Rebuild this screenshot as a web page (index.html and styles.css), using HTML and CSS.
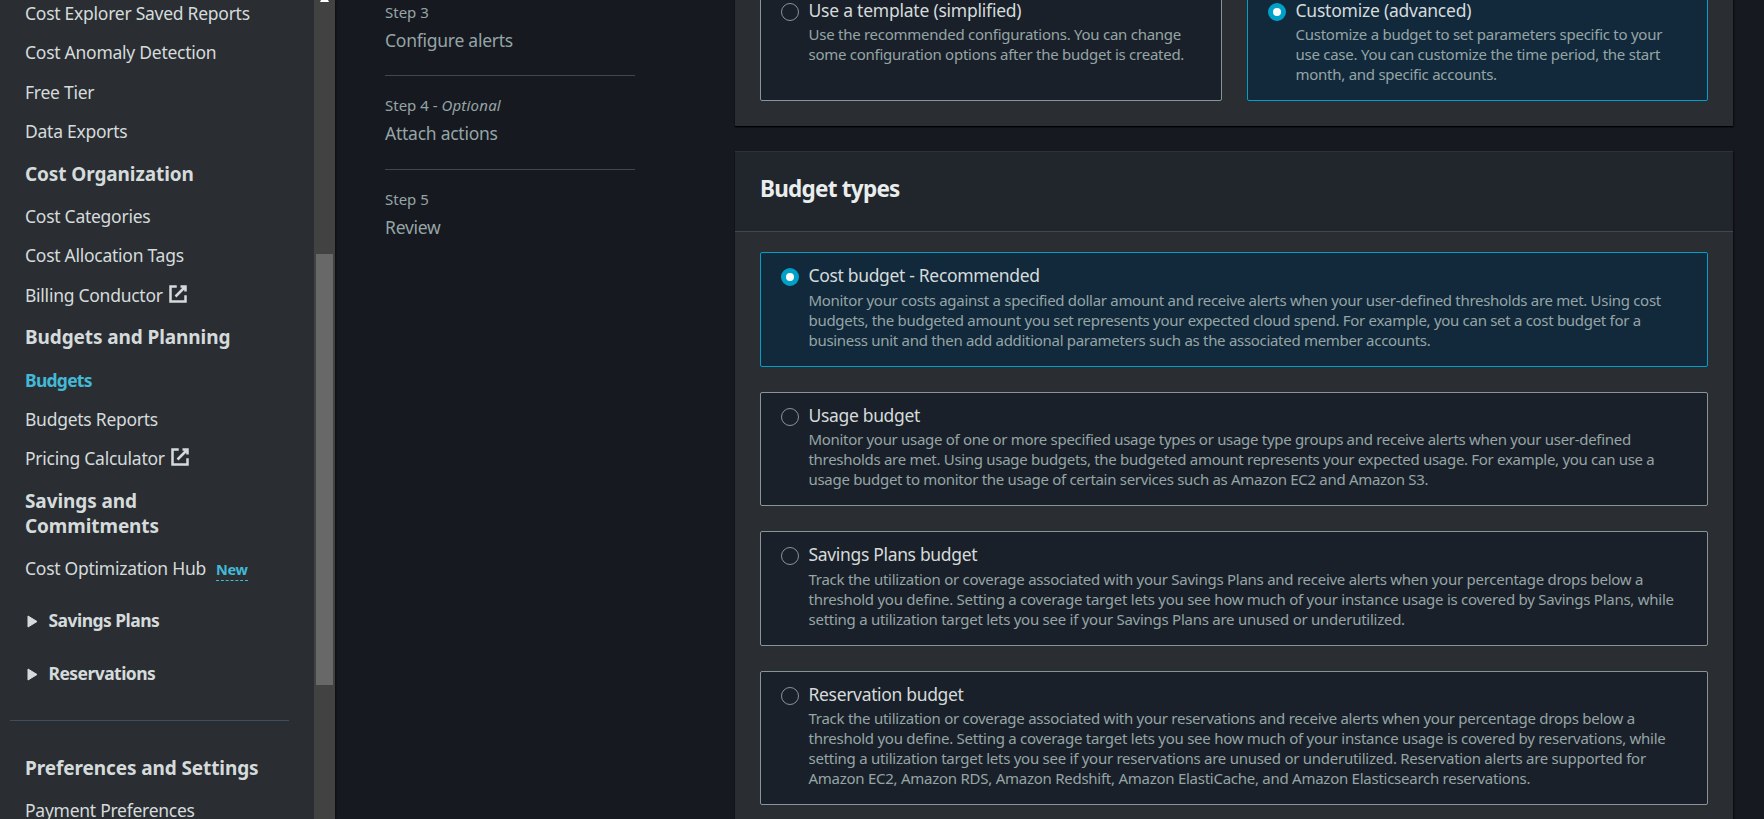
FILE: index.html
```html
<!DOCTYPE html>
<html lang="en">
<head>
<meta charset="utf-8">
<title>Create budget</title>
<link rel="stylesheet" href="styles.css">
</head>
<body>
<div class="app">
  <nav class="sidebar">
    <div class="nav">
      <a class="item">Cost Explorer Saved Reports</a>
      <a class="item">Cost Anomaly Detection</a>
      <a class="item">Free Tier</a>
      <a class="item">Data Exports</a>
      <h3 class="group">Cost Organization</h3>
      <a class="item">Cost Categories</a>
      <a class="item">Cost Allocation Tags</a>
      <a class="item">Billing Conductor<svg class="ext" viewBox="0 0 16 16"><path d="M10 2h4v4M6 10l8-8M14 9.05V14H2V2h5"/></svg></a>
      <h3 class="group">Budgets and Planning</h3>
      <a class="item active">Budgets</a>
      <a class="item">Budgets Reports</a>
      <a class="item">Pricing Calculator<svg class="ext" viewBox="0 0 16 16"><path d="M10 2h4v4M6 10l8-8M14 9.05V14H2V2h5"/></svg></a>
      <h3 class="group">Savings and<br>Commitments</h3>
      <a class="item">Cost Optimization Hub<span class="new">New</span></a>
      <div class="fold"><svg class="caret" viewBox="0 0 11 13"><path d="M1 1v11l9-5.500z"/></svg>Savings Plans</div>
      <div class="fold"><svg class="caret" viewBox="0 0 11 13"><path d="M1 1v11l9-5.500z"/></svg>Reservations</div>
      <hr class="rule">
      <h3 class="group">Preferences and Settings</h3>
      <a class="item">Payment Preferences</a>
    </div>
    <div class="track"><div class="arrow"></div><div class="thumb"></div></div>
  </nav>
  <ol class="steps">
    <li class="step"><div class="num">Step 3</div><div class="name">Configure alerts</div></li>
    <li class="step"><div class="num">Step 4 - <i class="optional">Optional</i></div><div class="name">Attach actions</div></li>
    <li class="step"><div class="num">Step 5</div><div class="name">Review</div></li>
  </ol>
  <main class="content">
    <section class="panel">
      <div class="tiles two">
        <label class="tile"><span class="radio"></span><span class="text"><span class="label">Use a template (simplified)</span><span class="desc">Use the recommended configurations. You can change<br>some configuration options after the budget is created.</span></span></label>
        <label class="tile selected"><span class="radio"></span><span class="text"><span class="label">Customize (advanced)</span><span class="desc">Customize a budget to set parameters specific to your<br>use case. You can customize the time period, the start<br>month, and specific accounts.</span></span></label>
      </div>
    </section>
    <section class="panel">
      <header class="head"><h2 class="title">Budget types</h2></header>
      <div class="tiles list">
        <label class="tile selected"><span class="radio"></span><span class="text"><span class="label">Cost budget - Recommended</span><span class="desc tight">Monitor your costs against a specified dollar amount and receive alerts when your user-defined thresholds are met. Using cost<br>budgets, the budgeted amount you set represents your expected cloud spend. For example, you can set a cost budget for a<br>business unit and then add additional parameters such as the associated member accounts.</span></span></label>
        <label class="tile"><span class="radio"></span><span class="text"><span class="label">Usage budget</span><span class="desc tight">Monitor your usage of one or more specified usage types or usage type groups and receive alerts when your user-defined<br>thresholds are met. Using usage budgets, the budgeted amount represents your expected usage. For example, you can use a<br>usage budget to monitor the usage of certain services such as Amazon EC2 and Amazon S3.</span></span></label>
        <label class="tile"><span class="radio"></span><span class="text"><span class="label">Savings Plans budget</span><span class="desc">Track the utilization or coverage associated with your Savings Plans and receive alerts when your percentage drops below a<br>threshold you define. Setting a coverage target lets you see how much of your instance usage is covered by Savings Plans, while<br>setting a utilization target lets you see if your Savings Plans are unused or underutilized.</span></span></label>
        <label class="tile"><span class="radio"></span><span class="text"><span class="label">Reservation budget</span><span class="desc">Track the utilization or coverage associated with your reservations and receive alerts when your percentage drops below a<br>threshold you define. Setting a coverage target lets you see how much of your instance usage is covered by reservations, while<br>setting a utilization target lets you see if your reservations are unused or underutilized. Reservation alerts are supported for<br>Amazon EC2, Amazon RDS, Amazon Redshift, Amazon ElastiCache, and Amazon Elasticsearch reservations.</span></span></label>
      </div>
    </section>
  </main>
</div>
</body>
</html>
```

FILE: styles.css
```css
* { box-sizing: border-box; }
body {
  margin: 0;
  height: 819px;
  overflow: hidden;
  background: #16191f;
  color: #d5dbdb;
  font-family: "Noto Sans", sans-serif;
  font-size: 17.500px;
  white-space: nowrap;
}
.app { display: flex; height: 819px; overflow: hidden; }

.sidebar {
  display: flex;
  flex: none;
  width: 335px;
  height: 819px;
  background: #2a2e33;
  box-shadow: 1px 0 2px rgba(0, 0, 0, .5);
}
.nav { display: flex; flex-direction: column; width: 314px; padding-left: 25px; }
.item {
  display: flex;
  flex: none;
  align-items: center;
  height: 27px;
  margin-bottom: 12.400px;
  line-height: 27px;
  letter-spacing: -.26px;
}
.active { color: #44b9d6; font-weight: 700; letter-spacing: -.75px; }
.group {
  flex: none;
  margin: 4.200px 0 16.300px;
  font-size: 19px;
  line-height: 25px;
  font-weight: 700;
  letter-spacing: -.1px;
}
.ext {
  width: 20px;
  height: 20px;
  margin: -3px 0 0 5px;
  fill: none;
  stroke: #d5dbdb;
  stroke-width: 2;
}
.new {
  height: 21px;
  margin: 3px 0 0 10px;
  border-bottom: 1px dashed #44b9d6;
  color: #44b9d6;
  font-size: 14.500px;
  line-height: 19px;
  font-weight: 700;
}
.fold {
  display: flex;
  flex: none;
  align-items: center;
  height: 27px;
  margin: 12.500px 0 13.500px;
  font-weight: 700;
  line-height: 27px;
  letter-spacing: -.55px;
}
.caret { width: 11px; height: 13px; margin: 2px 11px 0 1.500px; fill: #d5dbdb; stroke: #d5dbdb; stroke-linejoin: round; }
.rule { flex: none; width: 279px; height: 1px; margin: 19px 0 31px -15px; border: 0; background: #414d5c; }
.track { width: 21px; height: 819px; background: #424242; }
.arrow { width: 9px; height: 2px; margin: 0 auto 252px; background: #fff; clip-path: polygon(1px 0, 8px 0, 9px 2px, 0 2px); }
.thumb { width: 17px; height: 431px; margin-left: 2px; background: #686868; }

.steps { flex: none; width: 250px; margin: 0 100px 0 50px; padding: 2px 0 0; list-style: none; color: #95a5a6; }
.step { height: 94px; }
.step:first-child { height: 73px; }
.step + .step { border-top: 1px solid #414750; padding-top: 19px; }
.num { height: 25px; font-size: 15px; line-height: 20px; }
.optional { letter-spacing: .2px; }
.name { line-height: 27px; letter-spacing: -.25px; }

.content { flex: none; width: 998px; margin-top: -38px; }
.panel { margin-bottom: 25px; background: #2a2e33; box-shadow: 0 1px 1px #000, 1px 1px 2px rgba(0, 0, 0, .4); }
.panel:first-child { height: 164px; padding-top: 24px; }
.head { height: 81px; padding: 22px 25px 0; border-top: 1px solid #2f3338; border-bottom: 1px solid #414750; background: #21252c; }
.title { margin: 0; color: #eaeded; font-size: 22.500px; line-height: 30px; font-weight: 700; letter-spacing: -.75px; }
.tiles { display: grid; padding: 0 25px; }
.two { grid-template-columns: 462px 461px; column-gap: 25px; }
.list { row-gap: 25px; padding-top: 20px; padding-bottom: 100px; }
.tile {
  display: flex;
  min-height: 114.600px;
  padding: 9px 0 16px 20px;
  border: 1px solid #879596;
  border-radius: 2px;
  background: #1a2029;
}
.selected { border-color: #00a1c9; background: #12293b; }
.radio { flex: none; width: 18px; height: 18px; margin: 6px 9.500px 0 0; border: 1px solid #879596; border-radius: 50%; }
.selected .radio { border: 5.500px solid #00a1c9; background: #fff; }
.text, .label, .desc { display: block; }
.label { height: 27.500px; line-height: 27px; letter-spacing: -.33px; }
.two .label { line-height: 29px; letter-spacing: -.23px; }
.two .radio { margin-top: 7px; }
.desc { color: #95a5a6; font-size: 15px; line-height: 20px; letter-spacing: -.26px; }
.tight { letter-spacing: -.3px; }
```
